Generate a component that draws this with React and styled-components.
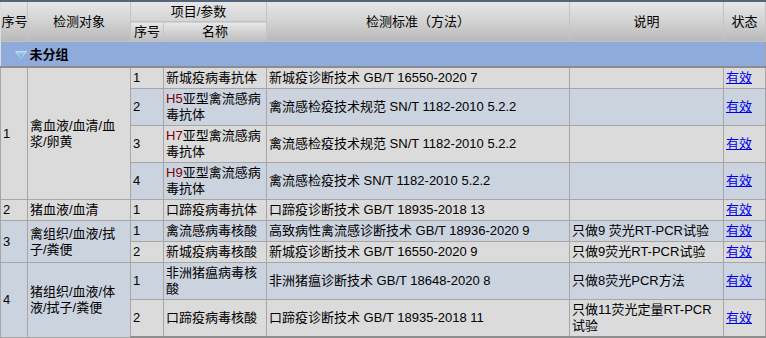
import React from "react";
import styled, { createGlobalStyle } from "styled-components";

const Global = createGlobalStyle`
  html, body { margin: 0; padding: 0; background: #dcdcdc; }
  body { font-family: "Liberation Sans", "Noto Sans CJK SC", Arial, sans-serif; font-size: 13px; }
`;

const Frame = styled.div`
  width: 766px;
  height: 338px;
  overflow: hidden;
  border-top: 2px solid #56647a;
  box-sizing: border-box;
  background: #dcdcdc;
`;

const Table = styled.table`
  width: 765px;
  table-layout: fixed;
  border-collapse: collapse;
  font-size: 13px;
  line-height: 16px;
  color: #000;
  border-right: 1px solid #a4a4a4;
`;

const HeadCell = styled.th`
  font-weight: normal;
  height: ${(p) => (p.$tall ? "39px" : "19px")};
  padding: 0 1px;
  text-align: center;
  vertical-align: middle;
  white-space: nowrap;
  border-left: 1px solid #c4c4c4;
  border-right: 1px solid #c4c4c4;
  border-bottom: 1px solid #c0c0c0;
  background: ${(p) =>
    p.$sub
      ? "linear-gradient(#e8e8e8, #d2d2d2 50%, #bebebe)"
      : p.$tall
      ? "linear-gradient(#e6e6e6, #d4d4d4 45%, #b9b9b9)"
      : "linear-gradient(#e6e6e6, #d4d4d4)"};
  &:first-child { border-left: none; }
`;

const GroupCell = styled.td`
  height: 23px;
  padding: 1px 0 0 14px;
  background: #8eabdb;
  border-bottom: 2px solid #8c8c8c;
  font-weight: bold;
  vertical-align: middle;
`;

const GroupLabel = styled.span`
  display: inline-flex;
  align-items: center;
  gap: 3px;
`;

const Cell = styled.td`
  padding: 2px 4px 2px 2px;
  vertical-align: middle;
  text-align: left;
  border: 1px solid #a6a6a6;
  background: ${(p) => (p.$tone === "blue" ? "#cbd3df" : "#dbdbdb")};
  overflow: hidden;
  word-break: break-all;
`;

const Prefix = styled.span`
  color: #7a0000;
`;

const StatusLink = styled.a`
  color: #0000ee;
  text-decoration: underline;
`;

const BottomRow = styled.tr`
  td { border-bottom: 2px solid #8e8e8e; }
`;

const Tri = () => (
  <svg width="12" height="8" viewBox="0 0 12 8">
    <defs>
      <linearGradient id="tg" x1="0" y1="0" x2="0" y2="1">
        <stop offset="0" stopColor="#a9d7f0" />
        <stop offset="1" stopColor="#4e9fd2" />
      </linearGradient>
    </defs>
    <path d="M0.5 0.5 H11.5 L6 7.5 Z" fill="url(#tg)" stroke="#c9e4f4" strokeWidth="0.8" />
  </svg>
);

const Name = ({ p, t }) => (
  <>
    {p && <Prefix>{p}</Prefix>}
    {t}
  </>
);

const groups = [
  {
    no: "1",
    obj: "禽血液/血清/血浆/卵黄",
    items: [
      { p: "", n: "新城疫病毒抗体", s: "新城疫诊断技术 GB/T 16550-2020 7", d: "" },
      { p: "H5", n: "亚型禽流感病毒抗体", s: "禽流感检疫技术规范 SN/T 1182-2010 5.2.2", d: "" },
      { p: "H7", n: "亚型禽流感病毒抗体", s: "禽流感检疫技术规范 SN/T 1182-2010 5.2.2", d: "" },
      { p: "H9", n: "亚型禽流感病毒抗体", s: "禽流感检疫技术 SN/T 1182-2010 5.2.2", d: "" },
    ],
  },
  {
    no: "2",
    obj: "猪血液/血清",
    items: [{ p: "", n: "口蹄疫病毒抗体", s: "口蹄疫诊断技术 GB/T 18935-2018 13", d: "" }],
  },
  {
    no: "3",
    obj: "禽组织/血液/拭子/粪便",
    items: [
      { p: "", n: "禽流感病毒核酸", s: "高致病性禽流感诊断技术 GB/T 18936-2020 9", d: "只做9 荧光RT-PCR试验" },
      { p: "", n: "新城疫病毒核酸", s: "新城疫诊断技术 GB/T 16550-2020 9", d: "只做9荧光RT-PCR试验" },
    ],
  },
  {
    no: "4",
    obj: "猪组织/血液/体液/拭子/粪便",
    items: [
      { p: "", n: "非洲猪瘟病毒核酸", s: "非洲猪瘟诊断技术 GB/T 18648-2020 8", d: "只做8荧光PCR方法" },
      { p: "", n: "口蹄疫病毒核酸", s: "口蹄疫诊断技术 GB/T 18935-2018 11", d: "只做11荧光定量RT-PCR试验" },
    ],
  },
];

export default function App() {
  let idx = 0;
  const rows = [];
  groups.forEach((g, gi) => {
    const startTone = idx % 2 === 0 ? "gray" : "blue";
    g.items.forEach((it, ii) => {
      const tone = idx % 2 === 0 ? "gray" : "blue";
      idx++;
      const last = gi === groups.length - 1 && ii === g.items.length - 1;
      const Row = last ? BottomRow : "tr";
      rows.push(
        <Row key={`${gi}-${ii}`}>
          {ii === 0 && (
            <>
              <Cell rowSpan={g.items.length} $tone={startTone}>{g.no}</Cell>
              <Cell rowSpan={g.items.length} $tone={startTone}>{g.obj}</Cell>
            </>
          )}
          <Cell $tone={tone}>{ii + 1}</Cell>
          <Cell $tone={tone}><Name p={it.p} t={it.n} /></Cell>
          <Cell $tone={tone}>{it.s}</Cell>
          <Cell $tone={tone}>{it.d}</Cell>
          <Cell $tone={tone}><StatusLink href="#">有效</StatusLink></Cell>
        </Row>
      );
    });
  });

  return (
    <Frame>
      <Global />
      <Table>
        <colgroup>
          <col style={{ width: 27 }} />
          <col style={{ width: 103 }} />
          <col style={{ width: 33 }} />
          <col style={{ width: 103 }} />
          <col style={{ width: 303 }} />
          <col style={{ width: 154 }} />
          <col style={{ width: 42 }} />
        </colgroup>
        <thead>
          <tr>
            <HeadCell rowSpan={2} $tall>序号</HeadCell>
            <HeadCell rowSpan={2} $tall>检测对象</HeadCell>
            <HeadCell colSpan={2}>项目/参数</HeadCell>
            <HeadCell rowSpan={2} $tall>检测标准（方法）</HeadCell>
            <HeadCell rowSpan={2} $tall>说明</HeadCell>
            <HeadCell rowSpan={2} $tall>状态</HeadCell>
          </tr>
          <tr>
            <HeadCell $sub>序号</HeadCell>
            <HeadCell $sub>名称</HeadCell>
          </tr>
        </thead>
        <tbody>
          <tr>
            <GroupCell colSpan={7}>
              <GroupLabel><Tri />未分组</GroupLabel>
            </GroupCell>
          </tr>
          {rows}
        </tbody>
      </Table>
    </Frame>
  );
}
